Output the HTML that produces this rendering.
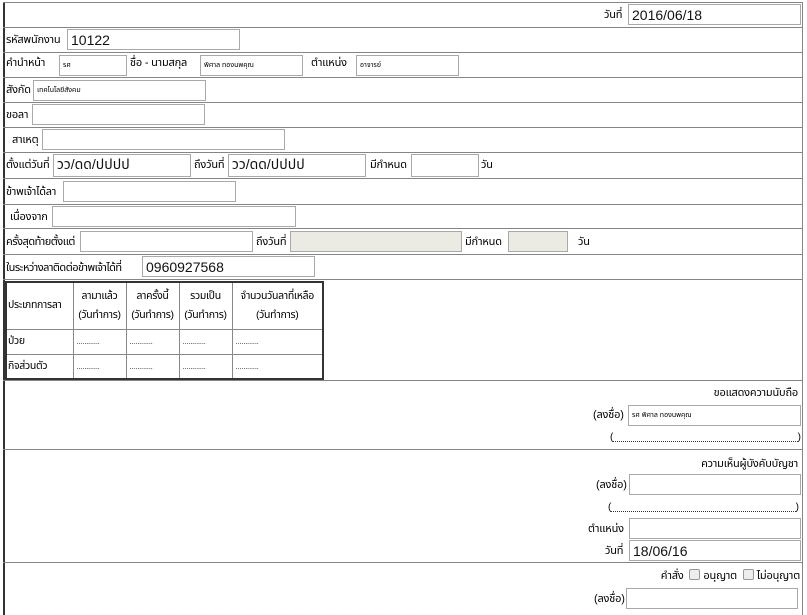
<!DOCTYPE html>
<html><head><meta charset="utf-8"><style>
*{box-sizing:border-box;margin:0;padding:0}
body{width:807px;height:615px;background:#fff;position:relative;overflow:hidden;font-family:"Liberation Sans","Noto Sans Thai","Tahoma",sans-serif;font-size:11px;color:#000}
.h{position:absolute;left:3px;width:800px;height:1px;background:#858585}
.t{position:absolute;white-space:nowrap;line-height:14px;letter-spacing:-0.2px}
.i{position:absolute;border:1px solid #a9a9a9;background:#fff;font-size:7px;padding:0 3px;display:flex;align-items:center;white-space:nowrap;overflow:hidden}
.i.b{font-size:14px;color:#111}
.g{background:#ebebe4}
.cb{display:inline-block;width:11px;height:11px;border:1px solid #999;border-radius:2px;background:#eee;vertical-align:-1px;margin:0 3px}
table{position:absolute;left:5px;top:281px;width:319px;border-collapse:collapse;border:2px solid #333;table-layout:fixed}
td{border:1px solid #888;font-size:10.5px;padding:0 1px;line-height:19px;white-space:nowrap;overflow:hidden;letter-spacing:-0.3px}
.d{font-size:8px;color:#333;padding-left:3px}
.dl{position:absolute;height:14px;font-size:10px;line-height:14px;display:flex}
.dl span.m{flex:1;border-bottom:1px dotted #333;margin-bottom:3px}
</style></head><body>
<div style="position:absolute;left:3px;top:2px;width:2px;height:613px;background:#333"></div>
<div style="position:absolute;left:802px;top:2px;width:1px;height:613px;background:#858585"></div>
<div class="h" style="top:2px"></div><div class="h" style="top:27px"></div><div class="h" style="top:52px"></div><div class="h" style="top:77px"></div><div class="h" style="top:102px"></div><div class="h" style="top:127px"></div><div class="h" style="top:152px"></div><div class="h" style="top:178px"></div><div class="h" style="top:204px"></div><div class="h" style="top:228px"></div><div class="h" style="top:254px"></div><div class="h" style="top:279px"></div><div class="h" style="top:380px"></div><div class="h" style="top:449px"></div><div class="h" style="top:562px"></div>

<div class="t" style="left:604px;top:8px">วันที่</div><div class="i b" style="left:628px;top:4px;width:173px;height:21px">2016/06/18</div>
<div class="t" style="left:6px;top:33px">รหัสพนักงาน</div><div class="i b" style="left:67px;top:29px;width:173px;height:21px">10122</div>
<div class="t" style="left:6px;top:56px">คำนำหน้า</div><div class="i" style="left:59px;top:55px;width:68px;height:21px">รศ</div>
<div class="t" style="left:130px;top:56px">ชื่อ - นามสกุล</div><div class="i" style="left:200px;top:55px;width:103px;height:21px">พิศาล ทองนพคุณ</div>
<div class="t" style="left:311px;top:56px">ตำแหน่ง</div><div class="i" style="left:356px;top:55px;width:103px;height:21px">อาจารย์</div>
<div class="t" style="left:6px;top:83px">สังกัด</div><div class="i" style="left:33px;top:80px;width:173px;height:21px">เทคโนโลยีสังคม</div>
<div class="t" style="left:6px;top:108px">ขอลา</div><div class="i" style="left:32px;top:104px;width:173px;height:21px"></div>
<div class="t" style="left:12px;top:133px">สาเหตุ</div><div class="i" style="left:42px;top:129px;width:243px;height:21px"></div>
<div class="t" style="left:6px;top:158px">ตั้งแต่วันที่</div><div class="i b" style="left:53px;top:154px;width:138px;height:23px">วว/ดด/ปปปป</div>
<div class="t" style="left:194px;top:158px">ถึงวันที่</div><div class="i b" style="left:228px;top:154px;width:138px;height:23px">วว/ดด/ปปปป</div>
<div class="t" style="left:370px;top:158px">มีกำหนด</div><div class="i" style="left:411px;top:154px;width:68px;height:23px"></div><div class="t" style="left:481px;top:158px">วัน</div>
<div class="t" style="left:6px;top:185px">ข้าพเจ้าได้ลา</div><div class="i" style="left:63px;top:181px;width:173px;height:21px"></div>
<div class="t" style="left:10px;top:210px">เนื่องจาก</div><div class="i" style="left:52px;top:206px;width:244px;height:21px"></div>
<div class="t" style="left:6px;top:235px;letter-spacing:-0.5px">ครั้งสุดท้ายตั้งแต่</div><div class="i" style="left:80px;top:231px;width:173px;height:21px"></div>
<div class="t" style="left:256px;top:235px">ถึงวันที่</div><div class="i g" style="left:290px;top:231px;width:172px;height:21px"></div>
<div class="t" style="left:465px;top:235px">มีกำหนด</div><div class="i g" style="left:508px;top:231px;width:60px;height:21px"></div><div class="t" style="left:578px;top:235px">วัน</div>
<div class="t" style="left:6px;top:261px;letter-spacing:-0.5px">ในระหว่างลาติดต่อข้าพเจ้าได้ที่</div><div class="i b" style="left:142px;top:256px;width:173px;height:21px">0960927568</div>

<table>
<colgroup><col style="width:67px"><col style="width:53px"><col style="width:53px"><col style="width:53px"><col></colgroup>
<tr style="height:47px"><td>ประเภทการลา</td><td style="text-align:center">ลามาแล้ว<br>(วันทำการ)</td><td style="text-align:center">ลาครั้งนี้<br>(วันทำการ)</td><td style="text-align:center">รวมเป็น<br>(วันทำการ)</td><td style="text-align:center">จำนวนวันลาที่เหลือ<br>(วันทำการ)</td></tr>
<tr style="height:25px"><td>ป่วย</td><td class="d">............</td><td class="d">............</td><td class="d">............</td><td class="d">............</td></tr>
<tr style="height:25px"><td>กิจส่วนตัว</td><td class="d">............</td><td class="d">............</td><td class="d">............</td><td class="d">............</td></tr>
</table>

<div class="t" style="right:9px;top:386px">ขอแสดงความนับถือ</div>
<div class="t" style="left:593px;top:408px">(ลงชื่อ)</div><div class="i" style="left:628px;top:405px;width:173px;height:21px">รศ พิศาล ทองนพคุณ</div>
<div class="dl" style="left:610px;top:431px;width:191px"><span>(</span><span class="m"></span><span>)</span></div>
<div class="t" style="right:9px;top:457px">ความเห็นผู้บังคับบัญชา</div>
<div class="t" style="left:596px;top:478px">(ลงชื่อ)</div><div class="i" style="left:629px;top:474px;width:172px;height:21px"></div>
<div class="dl" style="left:608px;top:501px;width:191px"><span>(</span><span class="m"></span><span>)</span></div>
<div class="t" style="left:588px;top:522px">ตำแหน่ง</div><div class="i" style="left:629px;top:518px;width:172px;height:21px"></div>
<div class="t" style="left:605px;top:544px">วันที่</div><div class="i b" style="left:629px;top:540px;width:172px;height:21px">18/06/16</div>
<div class="t" style="right:7px;top:569px">คำสั่ง <span class="cb"></span>อนุญาต <span class="cb"></span>ไม่อนุญาต</div>
<div class="t" style="left:594px;top:592px">(ลงชื่อ)</div><div class="i" style="left:626px;top:588px;width:172px;height:21px"></div>
</body></html>
